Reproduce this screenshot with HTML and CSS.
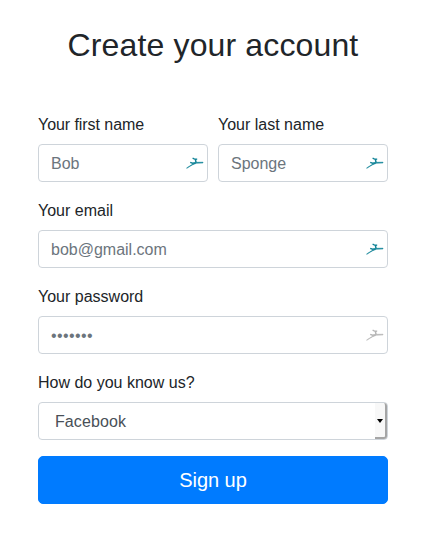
FILE: index.html
```html
<!DOCTYPE html>
<html lang="en">
<head>
<meta charset="utf-8">
<title>Create your account</title>
<link rel="stylesheet" href="styles.css">
</head>
<body>
<svg class="defs" width="0" height="0" aria-hidden="true">
  <symbol id="bird" viewBox="0 0 18 12">
    <path d="M0.5 11L7.2 6.8L9.8 5.3L17 5.2V6L10.5 6.2L6.2 8L0.8 11.3Z" fill="currentColor" stroke="currentColor" stroke-width="0.5"/>
    <path d="M6.6 1L8.4 2.1H11.2M10 2.2L9.5 3.8L10.2 5.4M4.2 5.4L6.6 6.2L9.5 5.6" fill="none" stroke="currentColor" stroke-width="1.4"/>
  </symbol>
</svg>
<form class="signup">
  <h1 class="title">Create your account</h1>
  <div class="row">
    <div class="group">
      <label class="label first" for="first">Your first name</label>
      <div class="field"><input class="control" id="first" type="text" placeholder="Bob"><svg class="bird"><use href="#bird"/></svg></div>
    </div>
    <div class="group">
      <label class="label" for="last">Your last name</label>
      <div class="field"><input class="control" id="last" type="text" placeholder="Sponge"><svg class="bird"><use href="#bird"/></svg></div>
    </div>
  </div>
  <div class="group">
    <label class="label" for="email">Your email</label>
    <div class="field"><input class="control" id="email" type="email" placeholder="bob@gmail.com"><svg class="bird"><use href="#bird"/></svg></div>
  </div>
  <div class="group">
    <label class="label" for="password">Your password</label>
    <div class="field"><input class="control password" id="password" type="password" placeholder="•••••••"><svg class="bird muted"><use href="#bird"/></svg></div>
  </div>
  <div class="group">
    <label class="label" for="source">How do you know us?</label>
    <div class="field select">
      <select class="control" id="source"><option>Facebook</option></select>
      <span class="drop"><span class="arrow"></span></span>
    </div>
  </div>
  <button class="submit" type="button">Sign up</button>
</form>
</body>
</html>
```
FILE: styles.css
```css
* { box-sizing: border-box; }
body {
  margin: 0;
  background: #fff;
  color: #212529;
  font: 16px/24px "Liberation Sans", Arial, sans-serif;
}
.defs { position: absolute; }
.signup { width: 350px; margin: 0 36px 0 38px; padding-top: 26px; }
.title {
  margin: 0 0 48px;
  font-size: 32px;
  font-weight: 400;
  line-height: 38px;
  letter-spacing: 0.14px;
  text-align: center;
}
.row { display: grid; grid-template-columns: 1fr 1fr; gap: 10px; }
.group { margin-bottom: 16px; }
.label { display: block; padding-top: 1px; margin-bottom: 7px; }
.first { letter-spacing: -0.06px; }
.field { position: relative; height: 38px; }
.control {
  display: block;
  width: 100%;
  height: 38px;
  margin: 0;
  padding: 7px 12px 5px;
  border: 1px solid #ced4da;
  border-radius: 4px;
  background: #fff;
  color: #495057;
  font: inherit;
  appearance: none;
}
.control::placeholder { color: #6c757d; opacity: 1; }
.password { letter-spacing: 0.4px; }
.select .control { padding-left: 16px; letter-spacing: 0.1px; }
.bird {
  position: absolute;
  right: 4px;
  top: 13px;
  width: 18px;
  height: 12px;
  color: #0e8296;
}
.bird.muted { color: #b5b5b5; }
.drop {
  position: absolute;
  top: 1px;
  right: 1px;
  bottom: 1px;
  width: 12px;
  padding-top: 2px;
  display: flex;
  align-items: center;
  justify-content: center;
  border-right: 2px solid #a5a5a5;
  border-bottom: 2px solid #a5a5a5;
  border-radius: 0 3px 3px 0;
  background: #f8f8f8;
  pointer-events: none;
}
.arrow {
  border: 3.5px solid transparent;
  border-top: 4px solid #000;
  border-bottom: 0;
}
.submit {
  display: block;
  width: 100%;
  height: 48px;
  border: 1px solid #007bff;
  border-radius: 5px;
  background: #007bff;
  color: #fff;
  font: 20px/30px "Liberation Sans", Arial, sans-serif;
  letter-spacing: -0.05px;
}
```
